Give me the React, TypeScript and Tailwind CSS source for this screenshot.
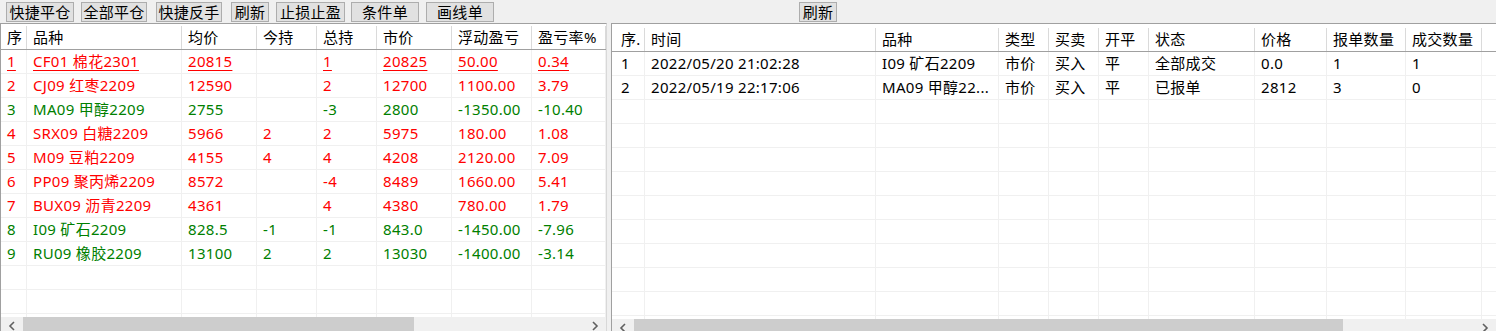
import React from 'react';

type Cell = { text: string; color?: 'red' | 'green' | 'black'; underline?: boolean };

const colorClass = {
  red: 'text-[#ff0000]',
  green: 'text-[#008000]',
  black: 'text-black',
};

const posRaw: [string, string, string, string, string, string, string, string][] = [
  ['1', 'CF01 棉花2301', '20815', '', '1', '20825', '50.00', '0.34'],
  ['2', 'CJ09 红枣2209', '12590', '', '2', '12700', '1100.00', '3.79'],
  ['3', 'MA09 甲醇2209', '2755', '', '-3', '2800', '-1350.00', '-10.40'],
  ['4', 'SRX09 白糖2209', '5966', '2', '2', '5975', '180.00', '1.08'],
  ['5', 'M09 豆粕2209', '4155', '4', '4', '4208', '2120.00', '7.09'],
  ['6', 'PP09 聚丙烯2209', '8572', '', '-4', '8489', '1660.00', '5.41'],
  ['7', 'BUX09 沥青2209', '4361', '', '4', '4380', '780.00', '1.79'],
  ['8', 'I09 矿石2209', '828.5', '-1', '-1', '843.0', '-1450.00', '-7.96'],
  ['9', 'RU09 橡胶2209', '13100', '2', '2', '13030', '-1400.00', '-3.14'],
];

const posRows: Cell[][] = posRaw.map((r, i) =>
  r.map((t) => ({
    text: t,
    color: r[6].startsWith('-') ? 'green' : 'red',
    underline: i === 0,
  }))
);

const orderRows: Cell[][] = [
  ['1', '2022/05/20 21:02:28', 'I09 矿石2209', '市价', '买入', '平', '全部成交', '0.0', '1', '1'],
  ['2', '2022/05/19 22:17:06', 'MA09 甲醇22...', '市价', '买入', '平', '已报单', '2812', '3', '0'],
].map((r) => r.map((t) => ({ text: t })));

function ToolButton({ label, className }: { label: string; className: string }) {
  return (
    <button
      className={`h-[20px] border border-[#adadad] bg-[#e1e1e1] text-[15px] leading-[18px] text-black flex items-center justify-center ${className}`}
    >
      {label}
    </button>
  );
}

function ScrollBar({ thumb }: { thumb: string }) {
  return (
    <div className="h-[17px] bg-[#f0f0f0] flex items-start">
      <div className="w-[22px] h-[17px] flex items-center justify-center">
        <svg width="8" height="10" viewBox="0 0 8 10">
          <path d="M6 1 L2 5 L6 9" stroke="#606060" strokeWidth="1.6" fill="none" />
        </svg>
      </div>
      <div className={`h-[17px] bg-[#cdcdcd] ${thumb}`} />
      <div className="flex-1" />
      <div className="w-[22px] h-[17px] flex items-center justify-center">
        <svg width="8" height="10" viewBox="0 0 8 10">
          <path d="M2 1 L6 5 L2 9" stroke="#606060" strokeWidth="1.6" fill="none" />
        </svg>
      </div>
    </div>
  );
}

function Table({
  widths,
  headers,
  rows,
  firstPad,
  headerTop,
  thumb,
  className,
}: {
  widths: number[];
  headers: string[];
  rows: Cell[][];
  firstPad: string;
  headerTop: string;
  thumb: string;
  className: string;
}) {
  const empty = 12 - rows.length;
  const allRows: Cell[][] = [...rows, ...Array.from({ length: empty }, () => widths.map(() => ({ text: '' })))];
  return (
    <div className={`flex flex-col bg-white border-l border-t border-[#a0a0a0] ${className}`}>
      <div className={`flex border-b border-[#a0a0a0] bg-white ${headerTop}`}>
        {headers.map((h, i) => (
          <div
            key={i}
            style={{ width: widths[i] }}
            className={`shrink-0 h-[23px] mt-[2px] flex items-center border-r border-[#dadada] whitespace-nowrap ${
              i === 0 ? firstPad : 'pl-[6px]'
            }`}
          >
            {h}
          </div>
        ))}
        <div className="flex-1" />
      </div>
      <div className="h-[267px] overflow-hidden">
        {allRows.map((r, ri) => (
          <div key={ri} className="flex h-[24px] border-b border-[#f0f0f0]">
            {r.map((c, ci) => (
              <div
                key={ci}
                style={{ width: widths[ci] }}
                className={`shrink-0 flex items-center border-r border-[#f0f0f0] whitespace-nowrap overflow-hidden ${
                  ci === 0 ? firstPad : 'pl-[6px]'
                } ${colorClass[c.color ?? 'black']}`}
              >
                <span className={c.underline ? 'underline underline-offset-[3px]' : ''}>{c.text}</span>
              </div>
            ))}
            <div className="flex-1" />
          </div>
        ))}
      </div>
      <ScrollBar thumb={thumb} />
    </div>
  );
}

export default function App() {
  return (
    <div
      className="w-[1496px] h-[331px] overflow-hidden bg-[#f0f0f0] text-[15px] tracking-[0.3px] text-black"
      style={{ fontFamily: '"Noto Sans", "Noto Sans CJK SC", sans-serif' }}
    >
      <div className="h-[23px] flex items-start pt-[2px]">
        <ToolButton label="快捷平仓" className="ml-[6px] w-[68px]" />
        <ToolButton label="全部平仓" className="ml-[7px] w-[66px]" />
        <ToolButton label="快捷反手" className="ml-[9px] w-[66px]" />
        <ToolButton label="刷新" className="ml-[9px] w-[38px]" />
        <ToolButton label="止损止盈" className="ml-[7px] w-[69px]" />
        <ToolButton label="条件单" className="ml-[6px] w-[68px]" />
        <ToolButton label="画线单" className="ml-[7px] w-[68px]" />
        <ToolButton label="刷新" className="ml-[305px] w-[38px]" />
      </div>
      <div className="flex items-start">
        <Table
          className="w-[607px] border-r border-r-[#d8d8d8]"
          widths={[26, 155, 75, 60, 60, 75, 80, 74]}
          headers={['序', '品种', '均价', '今持', '总持', '市价', '浮动盈亏', '盈亏率%']}
          rows={posRows}
          firstPad="pl-[6px]"
          headerTop=""
          thumb="w-[391px]"
        />
        <Table
          className="ml-[4px] flex-1"
          widths={[33, 231, 123, 50, 50, 50, 106, 72, 79, 76]}
          headers={['序.', '时间', '品种', '类型', '买卖', '开平', '状态', '价格', '报单数量', '成交数量']}
          rows={orderRows}
          firstPad="pl-[9px]"
          headerTop="pt-[2px]"
          thumb="w-[709px]"
        />
      </div>
    </div>
  );
}
